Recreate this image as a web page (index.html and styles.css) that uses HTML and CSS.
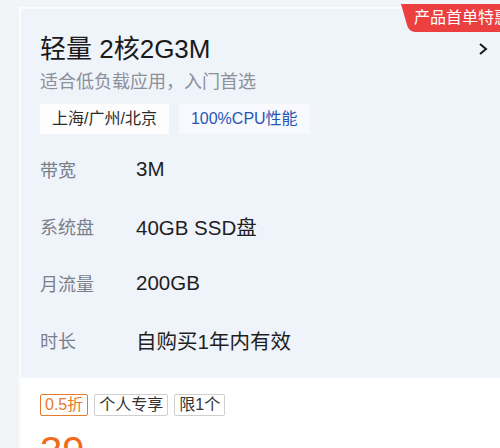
FILE: index.html
```html
<!DOCTYPE html>
<html lang="zh-CN">
  <head>
    <meta charset="UTF-8" />
    <title>轻量 2核2G3M</title>
    <link rel="stylesheet" href="styles.css">
  </head>
  <body>
    <div class="card">
      <div class="badge"><span>产品首单特惠</span></div>
      <div class="card-top">
        <div class="card-head">
          <div class="title">轻量 2核2G3M</div>
          <svg class="chevron" width="12" height="14" viewBox="0 0 12 14">
            <path d="M3 2 L9 7 L3 12" fill="none" stroke="#1a1a1a" stroke-width="2" />
          </svg>
        </div>
        <div class="subtitle">适合低负载应用，入门首选</div>
        <div class="tags">
          <span class="tag">上海/广州/北京</span>
          <span class="tag tag-blue">100%CPU性能</span>
        </div>
        <ul class="specs">
          <li><span class="label">带宽</span><span class="value">3M</span></li>
          <li><span class="label">系统盘</span><span class="value">40GB SSD盘</span></li>
          <li><span class="label">月流量</span><span class="value">200GB</span></li>
          <li><span class="label">时长</span><span class="value">自购买1年内有效</span></li>
        </ul>
      </div>
      <div class="card-bottom">
        <div class="promos">
          <span class="promo promo-off">0.5折</span>
          <span class="promo">个人专享</span>
          <span class="promo">限1个</span>
        </div>
        <div class="price">39</div>
      </div>
    </div>
  </body>
</html>
```

FILE: styles.css
```css
html,
body {
  overflow: hidden;
}
body {
  margin: 0;
  background: #f2f4f8;
  font-family: "Liberation Sans", "Noto Sans CJK SC", sans-serif;
  color: #1a1a1a;
}
.card {
  position: relative;
  margin: 7px 0 0 19px;
  width: 540px;
  border: 2px solid #fbfcfe;
  border-bottom: none;
  background: #ffffff;
}
.badge {
  position: absolute;
  top: -5px;
  left: 376px;
  right: 0;
  height: 28px;
  z-index: 1;
}
.badge::before {
  content: "";
  position: absolute;
  top: 0;
  bottom: 0;
  left: 4px;
  right: 0;
  background: #ec3f3f;
  border-radius: 0 0 0 6px;
  transform: skewX(16deg);
  transform-origin: top left;
}
.badge span {
  position: relative;
  display: block;
  padding-left: 17px;
  line-height: 28px;
  font-size: 16px;
  color: #fff;
  white-space: nowrap;
}
.card-top {
  background: #eff3fa;
  padding: 24px 19px 10px;
}
.card-head {
  width: 449px;
  display: flex;
  align-items: center;
  justify-content: space-between;
}
.title {
  font-size: 26px;
  line-height: 32px;
}
.chevron {
  display: block;
}
.subtitle {
  margin-top: 4px;
  font-size: 18px;
  line-height: 26px;
  color: #8c9099;
}
.tags {
  display: flex;
  gap: 10px;
  margin-top: 9px;
}
.tag {
  height: 30px;
  line-height: 30px;
  padding: 0 12px;
  font-size: 16px;
  background: #fdfdfe;
  color: #2b2b2b;
}
.tag-blue {
  background: #f7f9fe;
  color: #2856b6;
}
.specs {
  list-style: none;
  margin: 6px 0 0;
  padding: 0;
}
.specs li {
  display: flex;
  align-items: center;
  height: 57px;
}
.label {
  width: 96px;
  font-size: 18px;
  color: #7b7f8a;
}
.value {
  font-size: 20.5px;
  color: #1f1f1f;
}
.card-bottom {
  padding: 16px 19px 0;
}
.promos {
  display: flex;
  gap: 6px;
}
.promo {
  height: 20px;
  line-height: 20px;
  padding: 0 4px;
  border: 1px solid #cfcfcf;
  border-radius: 2px;
  font-size: 16px;
  color: #333;
}
.promo-off {
  border-color: #e8792e;
  color: #e8792e;
}
.price {
  margin-top: 11px;
  font-size: 40px;
  line-height: 48px;
  color: #ef6a1a;
}
```
